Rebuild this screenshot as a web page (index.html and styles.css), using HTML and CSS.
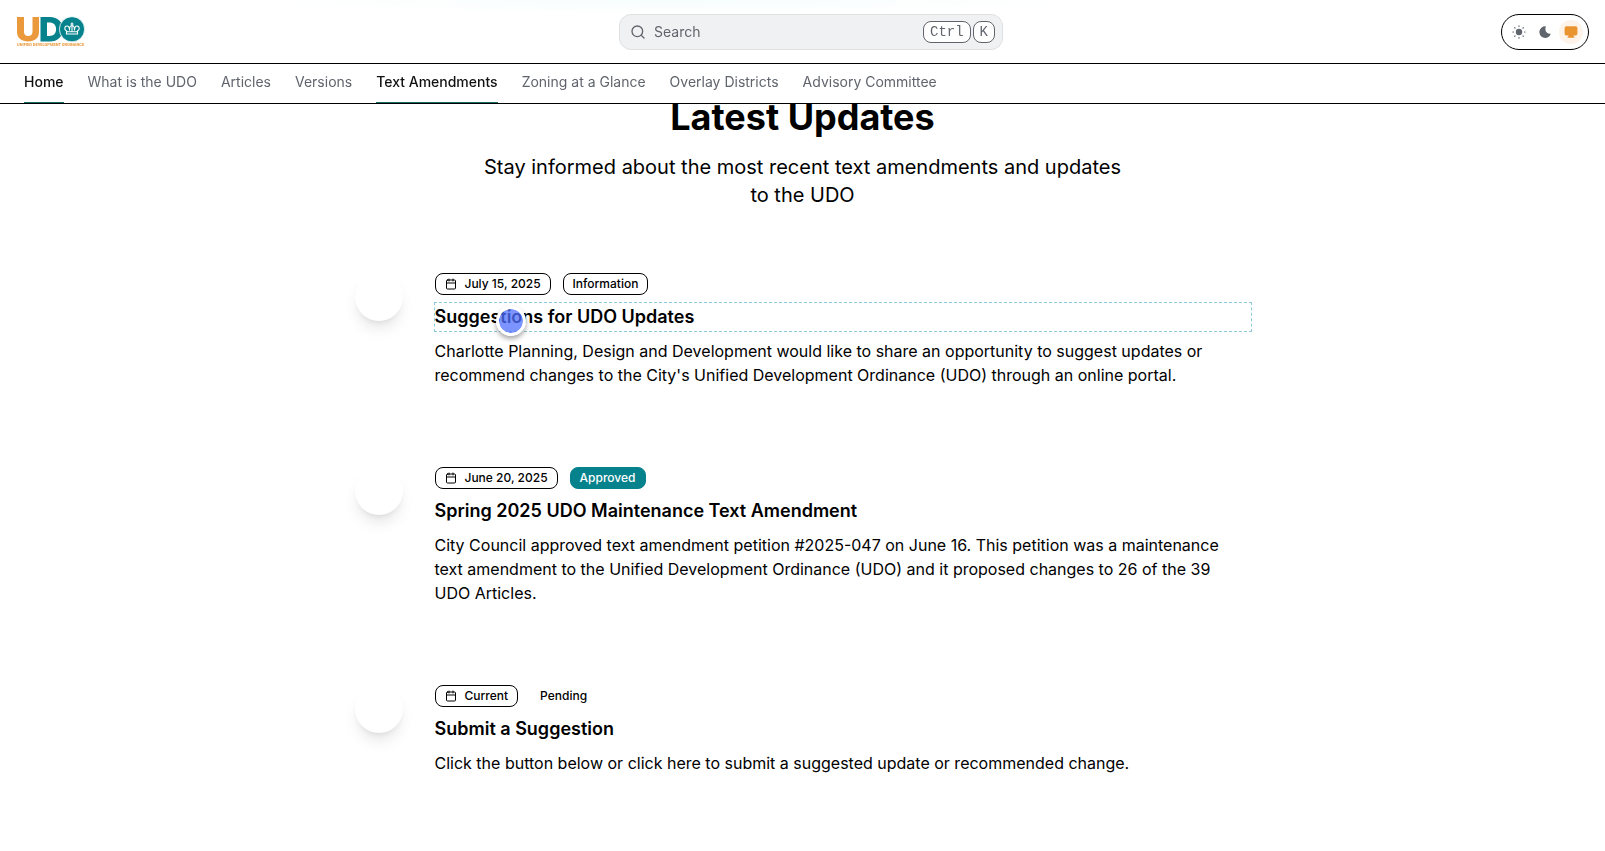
FILE: index.html
```html
<!DOCTYPE html>
<html lang="en">
<head>
<meta charset="utf-8">
<meta name="viewport" content="width=device-width, initial-scale=1">
<title>UDO</title>
<link rel="stylesheet" href="styles.css">
</head>
<body>
<svg class="sprite" aria-hidden="true">
  <symbol id="calendar" viewBox="0 0 24 24"><path d="M8 2v4M16 2v4M3 10h18"/><rect x="3" y="4" width="18" height="18" rx="2"/></symbol>
</svg>
<header class="header">
  <div class="topbar">
    <a class="brand" href="#" aria-label="UDO home">
      <svg class="logo" viewBox="0 0 68 30" width="68" height="30" aria-hidden="true">
        <path fill="#ea9a3c" d="M0 0h7v14.500c0 3 1.500 4.500 4.200 4.500s4.300-1.500 4.300-4.500V0h6.500v15c0 6-4.300 9.500-10.800 9.500S0 21 0 15z"/>
        <path fill="#06828c" fill-rule="evenodd" d="M23.500 0h9.300c8 0 13 5 13 12.200s-5 12.300-13 12.300h-9.300zM30 5.500v13.500h2.500c4 0 6.600-2.500 6.600-6.700s-2.600-6.800-6.600-6.800z"/>
        <circle cx="55" cy="12.250" r="12.600" fill="#06828c" stroke="#fff" stroke-width="0.800"/>
        <g fill="none" stroke="#fff" stroke-width="1.100"><path d="M50 14.500c-3.500-2-2.500-5.500 0-5.500 1.800 0 2.500 1.500 2.500 4.500 0-3 .5-5 2.500-5s2.500 2 2.500 5c0-3 .7-4.500 2.500-4.500 2.500 0 3.500 3.500 0 5.500M55 5.500v9M53.500 7h3M49.500 14.800h11v2.200h-11z"/></g>
        <text class="logo-text" x="0" y="29">UNIFIED DEVELOPMENT ORDINANCE</text>
      </svg>
    </a>
    <button class="search" type="button">
      <svg class="icon" viewBox="0 0 24 24" width="16" height="16" aria-hidden="true"><circle cx="11" cy="11" r="8"/><path d="m21 21-4.300-4.300"/></svg>
      <span>Search</span>
      <span class="keys"><kbd>Ctrl</kbd><kbd>K</kbd></span>
    </button>
    <div class="themes" role="group" aria-label="Theme">
      <button class="theme" type="button" aria-label="Light">
        <svg viewBox="0 0 24 24" width="14" height="14"><circle cx="12" cy="12" r="5.500" fill="currentColor"/><path fill="none" stroke="currentColor" stroke-width="2" stroke-linecap="round" d="M12 1.500v1M12 21.500v1M1.500 12h1M21.500 12h1M4.600 4.600l.6.600M18.800 18.800l.6.600M4.600 19.400l.6-.6M18.800 5.200l.6-.6"/></svg>
      </button>
      <button class="theme" type="button" aria-label="Dark">
        <svg viewBox="0 0 24 24" width="14" height="14"><path fill="currentColor" d="M13.500 2.200A10 10 0 1 0 22 14.500a7.500 7.500 0 0 1-6.500-1.200c-3-2.300-3.700-7-2-11.100z"/></svg>
      </button>
      <button class="theme selected" type="button" aria-label="System" aria-pressed="true">
        <svg viewBox="0 0 24 24" width="14" height="14"><path fill="currentColor" d="M4 2h16a3 3 0 0 1 3 3v10a3 3 0 0 1-3 3h-4c.3 1.500 1 2 2 2.800V22H6v-1.200c1-.8 1.700-1.300 2-2.800H4a3 3 0 0 1-3-3V5a3 3 0 0 1 3-3z"/></svg>
      </button>
    </div>
  </div>
  <nav class="tabs" aria-label="Main">
    <a class="tab active" href="#">Home</a>
    <a class="tab" href="#">What is the UDO</a>
    <a class="tab" href="#">Articles</a>
    <a class="tab" href="#">Versions</a>
    <a class="tab active" href="#">Text Amendments</a>
    <a class="tab" href="#">Zoning at a Glance</a>
    <a class="tab" href="#">Overlay Districts</a>
    <a class="tab" href="#">Advisory Committee</a>
  </nav>
</header>
<main class="updates">
  <div class="intro">
    <h2>Latest Updates</h2>
    <p>Stay informed about the most recent text amendments and updates to the UDO</p>
  </div>
  <div class="timeline">
    <article class="entry">
      <div class="marker"></div>
      <div class="body">
        <div class="badges">
          <span class="badge"><svg class="icon" width="12" height="12" aria-hidden="true"><use href="#calendar"/></svg>July 15, 2025</span>
          <span class="badge">Information</span>
        </div>
        <h3 class="hovered">Suggestions for UDO Updates<span class="pointer"></span></h3>
        <p>Charlotte Planning, Design and Development would like to share an opportunity to suggest updates or recommend changes to the City's Unified Development Ordinance (UDO) through an online portal.</p>
      </div>
    </article>
    <article class="entry">
      <div class="marker"></div>
      <div class="body">
        <div class="badges">
          <span class="badge"><svg class="icon" width="12" height="12" aria-hidden="true"><use href="#calendar"/></svg>June 20, 2025</span>
          <span class="badge approved">Approved</span>
        </div>
        <h3>Spring 2025 UDO Maintenance Text Amendment</h3>
        <p>City Council approved text amendment petition #2025-047 on June 16. This petition was a maintenance text amendment to the Unified Development Ordinance (UDO) and it proposed changes to 26 of the 39 UDO Articles.</p>
      </div>
    </article>
    <article class="entry">
      <div class="marker"></div>
      <div class="body">
        <div class="badges">
          <span class="badge"><svg class="icon" width="12" height="12" aria-hidden="true"><use href="#calendar"/></svg>Current</span>
          <span class="badge plain">Pending</span>
        </div>
        <h3>Submit a Suggestion</h3>
        <p>Click the button below or click here to submit a suggested update or recommended change.</p>
      </div>
    </article>
  </div>
</main>
</body>
</html>
```
FILE: styles.css
```css
* { box-sizing: border-box; }
body { margin: 0; background: #fff; color: #000; font: 16px/24px Inter, sans-serif; }
h2, h3, p { margin: 0; }
a { color: inherit; text-decoration: none; }
button { font: inherit; color: inherit; margin: 0; cursor: pointer; }
.sprite { position: absolute; width: 0; height: 0; }
.icon { fill: none; stroke: currentColor; stroke-width: 2; stroke-linecap: round; stroke-linejoin: round; flex: none; }

.header { position: fixed; top: 0; left: 0; right: 0; z-index: 2; background: radial-gradient(ellipse 420px 14px at 42% 0, #f6fdfc, #fff); font-size: 14px; line-height: 20px; }
.topbar { display: flex; align-items: center; justify-content: space-between; height: 64px; padding: 0 16px; border-bottom: 1px solid #000; }
.brand { width: 105px; padding-left: 1px; }
.logo { display: block; overflow: visible; }
.logo-text { font: 700 4px Roboto, sans-serif; fill: #ea9a3c; }
.search { display: flex; align-items: center; gap: 8px; width: 384px; height: 36px; padding: 0 7px 0 10px; border: 1px solid #dfe0e2; border-radius: 12px; background: #f0f1f3; color: #60646c; text-align: left; }
.keys { display: flex; gap: 2px; margin-left: auto; }
kbd { padding: 0 6px; border: 1px solid #60646c; border-radius: 8px; background: #fff; font: 14px/20px "Liberation Mono", monospace; }
.themes { display: flex; align-items: center; gap: 2px; padding: 5px; border: 1px solid #000; border-radius: 18px; }
.theme { display: flex; align-items: center; justify-content: center; width: 24px; height: 24px; padding: 0; border: 0; border-radius: 50%; background: none; color: #60646c; }
.theme.selected { background: #fdf3e9; color: #ea9430; }
.tabs { display: flex; gap: 24px; height: 40px; padding: 0 24px; border-bottom: 1px solid #000; }
.tab { padding: 8px 0 10px; border-bottom: 1px solid transparent; color: #60646c; white-space: nowrap; }
.tab.active { color: #111; font-weight: 500; border-color: #1c6b60; }

.updates { padding: 97px 24px 0; }
.intro { max-width: 656px; margin: 0 auto 64px; text-align: center; }
.intro h2 { margin-bottom: 16px; font-size: 36px; line-height: 40px; font-weight: 700; }
.intro p { font-size: 20px; line-height: 28px; }
.timeline { display: flex; flex-direction: column; gap: 80px; max-width: 896px; margin: 0 auto; }
.entry { display: flex; gap: 32px; }
.marker { flex: none; width: 48px; height: 48px; border-radius: 50%; background: #fff; box-shadow: 0 10px 15px -3px rgba(0,0,0,.1), 0 4px 6px -4px rgba(0,0,0,.1); }
.body { flex: 1; display: flex; flex-direction: column; gap: 8px; }
.body p { padding-right: 16px; }
.badges { display: flex; gap: 12px; }
.badge { display: flex; align-items: center; gap: 8px; padding: 2px 9px; border: 1px solid #000; border-radius: 8px; font-size: 12px; line-height: 16px; font-weight: 500; }
.badge.approved { background: #06828c; border-color: #06828c; color: #fff; }
.badge.plain { border-color: transparent; }
h3 { font-size: 18px; line-height: 28px; font-weight: 600; }
.hovered { position: relative; outline: 1px dashed #8ecbd8; }
.pointer { position: absolute; left: 61px; top: 3px; width: 30px; height: 30px; border: 3px solid #fff; border-radius: 50%; background: rgba(80,112,255,.75); background-clip: padding-box; box-shadow: 0 3px 5px rgba(0,0,0,.35); }
```
